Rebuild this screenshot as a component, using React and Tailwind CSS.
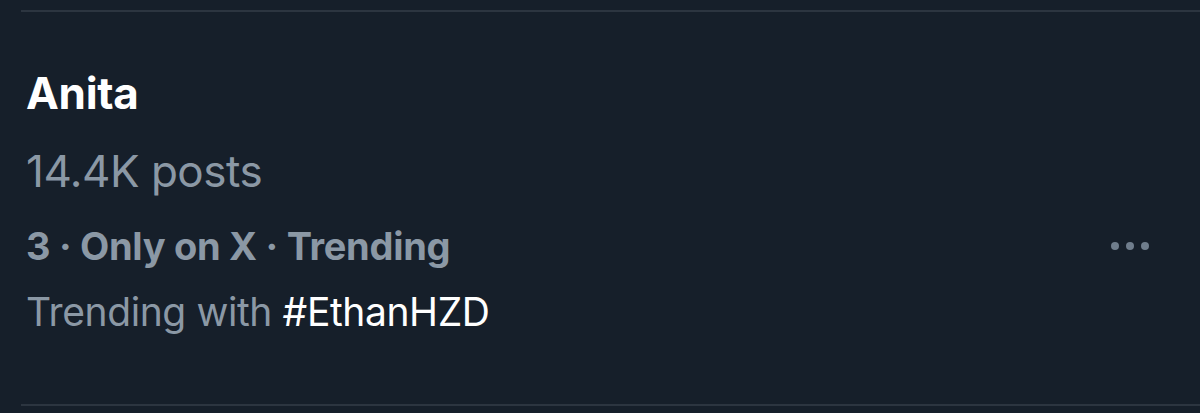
export default function App() {
  return (
    <div className="w-[1200px] h-[413px] bg-[#161f2a] overflow-hidden" style={{ fontFamily: "Inter, 'Noto Sans', sans-serif" }}>
      <div className="ml-[21px] pt-[10px] h-full flex flex-col">
        <div className="h-[2px] bg-[#2c3540]" />
        <div className="flex-1 flex items-start justify-between pl-[5px] pr-[51px]">
          <div className="flex flex-col">
            <div className="mt-[59px] text-[44px] leading-none font-bold text-white tracking-[-0.3px]">Anita</div>
            <div className="mt-[34px] text-[44px] leading-none text-[#8b98a5] tracking-[-0.5px]">14.4K posts</div>
            <div className="mt-[34px] text-[38px] leading-none font-bold text-[#8b98a5] tracking-[-0.3px]">
              3 · Only on X · Trending
            </div>
            <div className="mt-[27px] text-[39px] leading-none text-[#8b98a5] tracking-[-0.4px]">
              Trending with <span className="text-white">#EthanHZD</span>
            </div>
          </div>
          <div className="mt-[230px] flex gap-[7px]">
            <span className="w-[8px] h-[8px] rounded-full bg-[#6f7d8c]" />
            <span className="w-[8px] h-[8px] rounded-full bg-[#6f7d8c]" />
            <span className="w-[8px] h-[8px] rounded-full bg-[#6f7d8c]" />
          </div>
        </div>
        <div className="h-[2px] bg-[#2c3540] mb-[7px]" />
      </div>
    </div>
  )
}
